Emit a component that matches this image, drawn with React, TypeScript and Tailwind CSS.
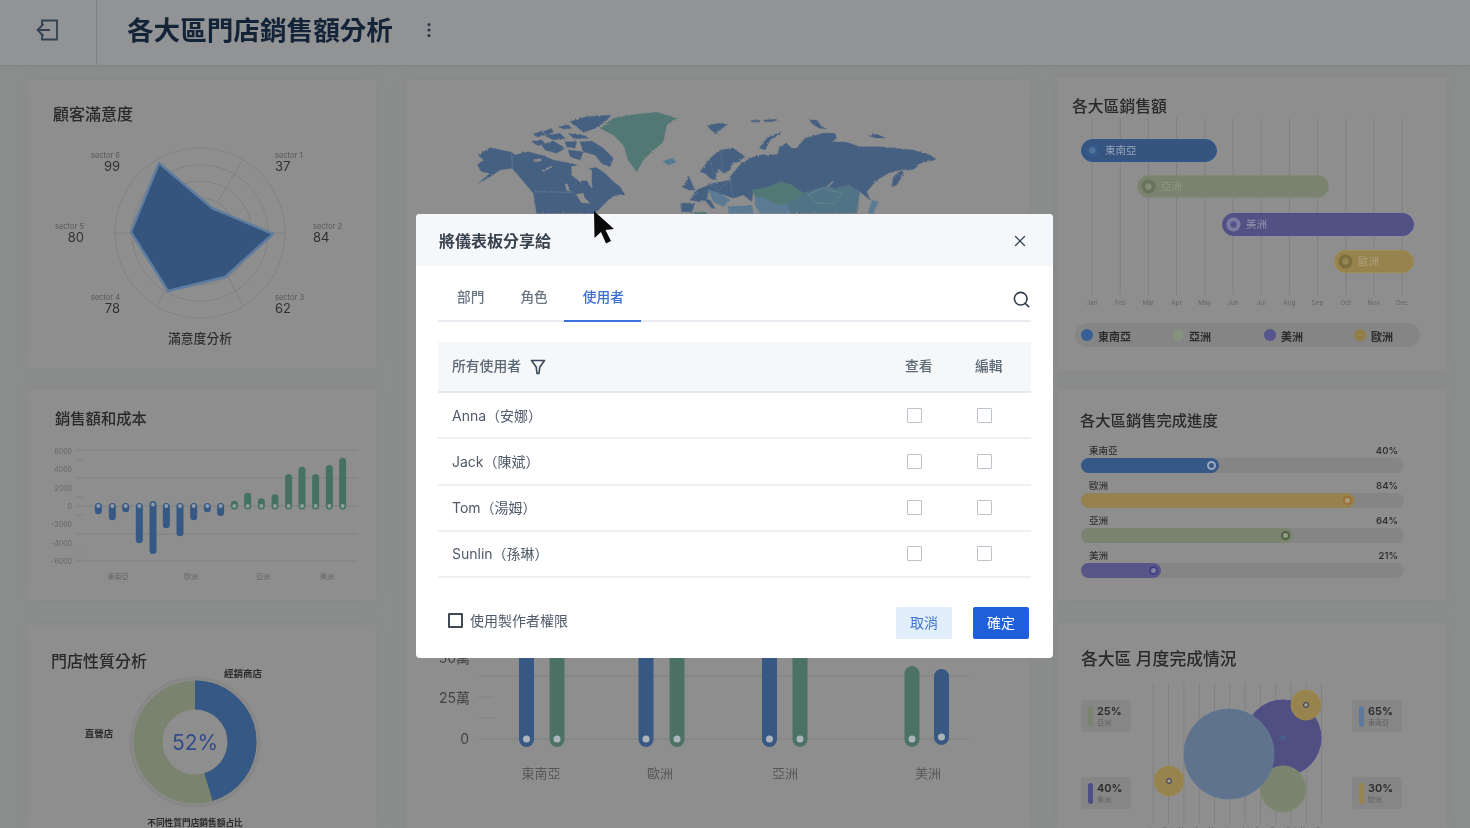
import { Search, X } from "lucide-react";

const months = ["Jan","Feb","Mar","Apr","May","Jun","Jul","Aug","Sep","Oct","Nov","Dec"];

const BLUE = "#456690", GRN = "#50807c", TEAL = "#4f7a90", LIGHT = "#5a82a0", GAP = "#969696";

function Poly({ p, c }: { p: string; c: string }) {
  return <polygon points={p} fill={c} stroke={c} strokeWidth="1" strokeLinejoin="round" />;
}

function WorldMap() {
  const west: [string, string][] = [
    ["25,150 60,128 125,142 135,150 175,140 220,152 250,165 300,175 360,190 380,188 405,205 430,230 450,245 465,270 440,270 420,280 405,295 385,315 370,325 200,325 190,265 165,235 140,205 125,190 90,195 60,215 25,235 60,205 35,200 22,180 40,165", BLUE],
    ["305,185 335,178 365,195 365,250 350,225 330,230 305,210", GAP],
    ["318,268 340,265 345,280 360,295 335,293", GAP],
    ["215,197 245,183 245,187 222,199", GAP],
    ["190,165 215,160 212,168 195,170", GAP],
    ["285,238 292,236 298,258 290,255", GAP],
    ["300,50 350,35 425,30 405,50 375,70 340,82 320,65", BLUE],
    ["265,65 295,60 305,70 280,72", BLUE],
    ["220,80 245,70 250,82 228,90", BLUE],
    ["190,88 215,78 225,90 200,95", BLUE],
    ["225,92 270,85 285,100 250,105", BLUE],
    ["295,85 345,92 355,100 310,100", BLUE],
    ["185,110 215,105 225,115 205,122", BLUE],
    ["215,120 250,108 285,130 260,145 225,135", BLUE],
    ["330,110 365,108 400,130 430,160 420,185 395,175 375,150 340,140", BLUE],
    ["285,110 320,110 315,130 290,125", BLUE],
    ["295,135 340,140 330,165 300,155", BLUE],
    ["390,70 430,40 500,28 560,22 620,40 590,60 580,110 545,140 520,165 500,200 475,165 460,120 430,90", GRN],
    ["578,168 610,160 617,172 595,180", "#4f829c"],
  ];
  const east: [string, string][] = [
    ["82,62 115,55 142,58 120,75 105,85 90,72", BLUE],
    ["212,47 240,45 238,50 216,51", BLUE],
    ["250,45 290,43 285,49 255,50", BLUE],
    ["390,45 410,45 425,65 440,72 415,68 395,55", BLUE],
    ["565,92 590,88 615,98 590,100", BLUE],
    ["240,125 265,95 305,82 300,88 270,105 255,135 240,130", BLUE],
    ["150,215 180,180 210,160 240,150 290,150 300,125 320,115 335,130 350,130 375,100 430,85 465,85 470,100 455,110 500,112 540,125 600,125 640,130 700,135 750,150 768,163 720,175 700,195 660,195 625,205 590,225 560,260 570,285 540,260 505,240 470,250 430,245 400,255 370,265 335,240 300,230 270,245 220,255 215,290 190,270 160,240", BLUE],
    ["635,245 640,215 665,195 670,205 650,240", BLUE],
    ["437,248 458,228 460,231 440,250", GAP],
    ["60,200 90,160 120,135 160,130 195,155 175,170 155,175 150,195 130,205 115,190 105,225 90,220 75,205", BLUE],
    ["15,240 25,212 40,245 45,255 25,255 5,245", BLUE],
    ["30,285 50,255 100,235 150,225 190,250 190,270 160,280 120,265 85,255 80,285 60,290", BLUE],
    ["3,295 45,295 35,320 5,320", BLUE],
    ["85,255 120,265 150,285 130,305 100,290", LIGHT],
    ["75,285 90,285 105,310 95,310", BLUE],
    ["145,305 215,300 220,325 145,325", LIGHT],
    ["225,275 250,275 290,300 320,295 330,325 240,325 225,300", LIGHT],
    ["218,255 270,245 300,230 335,240 370,265 345,285 320,295 290,300 250,275 225,275", GRN],
    ["370,265 400,255 430,245 470,250 505,240 540,260 535,290 530,325 330,325 320,295 345,285", TEAL],
    ["575,285 595,290 580,325 565,325", LIGHT],
    ["42,322 80,322 78,327 45,327", GRN],
  ];
  return (
    <svg className="block ml-[3px] mt-[10px] w-[650px] h-[125px] shrink-0" viewBox="0 0 1950 375">
      <defs>
        <filter id="coast" x="-2%" y="-2%" width="104%" height="104%">
          <feTurbulence type="fractalNoise" baseFrequency="0.14" numOctaves="2" seed="4" />
          <feDisplacementMap in="SourceGraphic" scale="8" />
        </filter>
      </defs>
      <g filter="url(#coast)">
        <g transform="translate(180 45)">
          {west.map(([p, c], i) => <Poly key={i} p={p} c={c} />)}
          <polyline points="190,260 312,262" fill="none" stroke="#7a92b0" strokeWidth="1.5" />
          <polyline points="125,142 127,195" fill="none" stroke="#7a92b0" strokeWidth="1.5" />
        </g>
        <g transform="translate(810 45)">
          {east.map(([p, c], i) => <Poly key={i} p={p} c={c} />)}
          <polyline points="385,268 430,250 490,265 460,295 410,295 385,268" fill="none" stroke="#7a9eac" strokeWidth="1.5" />
          <polyline points="90,160 105,225" fill="none" stroke="#7a92b0" strokeWidth="1" />
          <polyline points="120,135 130,205" fill="none" stroke="#7a92b0" strokeWidth="1" />
          <polyline points="100,235 110,260 150,225 160,280" fill="none" stroke="#7a92b0" strokeWidth="1" />
        </g>
      </g>
    </svg>
  );
}

function Radar() {
  const cx = 200, cy = 233;
  const pts = "159,163 212,208 273,234 225,277 168,291 131,232";
  const labels = [
    { x: 275, y: 158, a: "start", n: "sector 1", v: "37" },
    { x: 313, y: 229, a: "start", n: "sector 2", v: "84" },
    { x: 275, y: 300, a: "start", n: "sector 3", v: "62" },
    { x: 120, y: 300, a: "end", n: "sector 4", v: "78" },
    { x: 84, y: 229, a: "end", n: "sector 5", v: "80" },
    { x: 120, y: 158, a: "end", n: "sector 6", v: "99" },
  ];
  return (
    <svg className="block w-[348px] h-[243px]" viewBox="28 125 348 243">
      {[85, 68, 52, 35].map((r) => (
        <circle key={r} cx={cx} cy={cy} r={r} fill="none" stroke="#888888" strokeWidth="1" />
      ))}
      <path d="M217 203 L243 159 M228 277 L243 306 M157 306 L172 277 M113 233 L131 233 M273 233 L285 233" stroke="#888888" strokeWidth="1" />
      <polygon points={pts} fill="#325a8e" stroke="#5f84ae" strokeWidth="2.5" strokeLinejoin="round" />
      {labels.map((l) => (
        <g key={l.n} textAnchor={l.a as "start" | "end"}>
          <text x={l.x} y={l.y} fontSize="7.5" fill="#5c5c5c">{l.n}</text>
          <text x={l.x} y={l.y + 13} fontSize="13" fill="#333" >{l.v}</text>
        </g>
      ))}
      <text x={200} y={343} fontSize="12.8" textAnchor="middle" fill="#333" fontWeight="500">滿意度分析</text>
    </svg>
  );
}

function Bars() {
  const yl = [["6000", 453.5], ["4000", 472], ["2000", 490.5], ["0", 508.5], ["-2000", 527], ["-4000", 545.5], ["-6000", 563.5]] as const;
  const bx = [295,337,377,418,459,499,540,581,622,662].map((v) => v / 3);
  const bb = [403,421,397,490,522,445,469,421,397,408];
  const gx = [703,743,784,825,866,906,947,988,1028].map((v) => v / 3);
  const gt = [362,338,355,343,282,260,282,255,233];
  return (
    <svg className="block w-[348px] h-[163px]" viewBox="28 437 348 163">
      {[450, 478, 506, 534, 561].map((y) => <line key={y} x1="76" x2="358" y1={y} y2={y} stroke="#868686" />)}
      {[460, 497, 515, 552].map((y) => <line key={y} x1="76" x2="83" y1={y} y2={y} stroke="#868686" />)}
      {yl.map(([t, y]) => <text key={t} x="72" y={y} fontSize="7" textAnchor="end" fill="#6a6a6a">{t}</text>)}
      {bx.map((x, i) => (
        <g key={x}>
          <rect x={x - 3.5} y={i === 4 ? 501 : 503} width="7" height={380 + bb[i] / 3 - (i === 4 ? 501 : 503)} rx="3.5" fill="#335d94" />
          <circle cx={x} cy={i === 4 ? 504.5 : 506} r="2" fill="#95a4b8" />
        </g>
      ))}
      {gx.map((x, i) => (
        <g key={x}>
          <rect x={x - 3.5} y={380 + gt[i] / 3} width="7" height={509.5 - 380 - gt[i] / 3} rx="3.5" fill="#447866" />
          <circle cx={x} cy="506" r="2" fill="#95a8a0" />
        </g>
      ))}
      {[["東南亞", 118], ["歐洲", 191], ["亞洲", 263], ["美洲", 327]].map(([t, x]) => (
        <text key={t} x={x} y="579" fontSize="7" textAnchor="middle" fill="#6a6a6a">{t}</text>
      ))}
    </svg>
  );
}

function Donut() {
  return (
    <svg className="block w-[348px] h-[163px]" viewBox="28 665 348 163">
      <circle cx="195" cy="742" r="64" fill="none" stroke="#8e8e8e" strokeWidth="3" />
      <circle cx="195" cy="742" r="47" fill="none" stroke="#7f8a72" strokeWidth="29" />
      <circle cx="195" cy="742" r="47" fill="none" stroke="#335d94" strokeWidth="29" strokeDasharray="133.7 295.3" transform="rotate(-90 195 742)" />
      <text x="195" y="750" fontSize="21" textAnchor="middle" fill="#2f4f9e">52%</text>
      <text x="243" y="677" fontSize="9.5" textAnchor="middle" fill="#2e2e2e" fontWeight="700">經銷商店</text>
      <text x="99" y="736.5" fontSize="9.5" textAnchor="middle" fill="#2e2e2e" fontWeight="700">直營店</text>
      <text x="195" y="826" fontSize="8.7" textAnchor="middle" fill="#2e2e2e" fontWeight="700">不同性質門店銷售額占比</text>
    </svg>
  );
}

function MidChart() {
  const bars = [
    [526.5, "#355d92", 640, 747], [557, "#4a7a68", 640, 747],
    [646, "#355d92", 640, 747], [677, "#4a7a68", 640, 747],
    [769.5, "#355d92", 640, 747], [800, "#4a7a68", 640, 747],
    [912, "#4a7a68", 666, 747], [941.5, "#355d92", 669, 745],
  ] as const;
  return (
    <svg className="block w-[622px] h-[188px] mt-auto shrink-0" viewBox="407 640 622 188">
      <line x1="479" x2="969" y1="676" y2="676" stroke="#868686" />
      <line x1="479" x2="969" y1="739" y2="739" stroke="#868686" />
      <line x1="478" x2="494" y1="697" y2="697" stroke="#888" />
      <line x1="478" x2="494" y1="718" y2="718" stroke="#888" />
      <text x="470" y="663" fontSize="14" textAnchor="end" fill="#484848">50萬</text>
      <text x="470" y="703" fontSize="14" textAnchor="end" fill="#484848">25萬</text>
      <text x="469" y="744" fontSize="14" textAnchor="end" fill="#484848">0</text>
      {bars.map(([x, c, t, e]) => (
        <g key={x}>
          <rect x={x - 7.5} y={t} width="15" height={e - t} rx="7.5" fill={c} />
          <circle cx={x} cy={e - 8} r="3.5" fill="#b4bec6" />
        </g>
      ))}
      {[["東南亞", 541], ["歐洲", 660], ["亞洲", 785], ["美洲", 928]].map(([t, x]) => (
        <text key={t} x={x} y="778" fontSize="13" textAnchor="middle" fill="#5c5c5c">{t}</text>
      ))}
    </svg>
  );
}

function Gantt() {
  const rows = [
    { x: 1081, w: 136, y: 139, f: "#325a90", s: "#2a5ea4", t: "東南亞", k: "#31609e", i: "#4f78a8", c: "#9aabc2" },
    { x: 1137, w: 192, y: 175, f: "#7f8a72", s: "#85937a", t: "亞洲", k: "#6d7a5d", i: "#879577", c: "#959f87" },
    { x: 1222, w: 192, y: 213, f: "#555594", s: "#5050a4", t: "美洲", k: "#8282b0", i: "#58589c", c: "#9c9cba" },
    { x: 1334, w: 80, y: 250, f: "#a38a48", s: "#ad9248", t: "歐洲", k: "#857538", i: "#a08e52", c: "#b6a97e" },
  ];
  return (
    <svg className="block w-[390px] h-[240px]" viewBox="1057 116 390 240">
      {months.map((m, i) => {
        const x = 1092 + i * 28.2;
        return (
          <g key={m}>
            <line x1={x} x2={x} y1="118" y2="295" stroke="#878787" />
            <text x={x} y="305" fontSize="6.5" textAnchor="middle" fill="#6a6a6a">{m}</text>
          </g>
        );
      })}
      {rows.map((r) => (
        <g key={r.t}>
          <rect x={r.x + 0.5} y={r.y + 0.5} width={r.w - 1} height="22" rx="11" fill={r.f} stroke={r.s} />
          <circle cx={r.x + 11.5} cy={r.y + 11.5} r="7" fill={r.k} />
          <circle cx={r.x + 11.5} cy={r.y + 11.5} r="3.2" fill={r.i} />
          <text x={r.x + 24} y={r.y + 15} fontSize="10.5" fill={r.c}>{r.t}</text>
        </g>
      ))}
      <rect x="1075" y="323" width="345" height="24" rx="12" fill="#8c8c8c" />
      {[[1087, "#3364a8", "東南亞"], [1178, "#8b9a80", "亞洲"], [1270, "#5a5a9e", "美洲"], [1360, "#9a8640", "歐洲"]].map(([x, c, t]) => (
        <g key={t as string}>
          <circle cx={x as number} cy="335" r="6" fill={c as string} />
          <text x={(x as number) + 11} y="340.5" fontSize="11" fontWeight="600" fill="#2e2e2e">{t}</text>
        </g>
      ))}
    </svg>
  );
}

function Progress() {
  const rows = [
    { t: "東南亞", p: "40%", wc: "w-[138px]", bg: "bg-[#335d96]", ring: "border-[#a0b2ca]", dot: "bg-[#335d96]" },
    { t: "歐洲", p: "84%", wc: "w-[274px]", bg: "bg-[#a38848]", ring: "border-[#a8762e]", dot: "bg-[#b6a480]" },
    { t: "亞洲", p: "64%", wc: "w-[212px]", bg: "bg-[#7e8b72]", ring: "border-[#4f663e]", dot: "bg-[#97a48c]" },
    { t: "美洲", p: "21%", wc: "w-[80px]", bg: "bg-[#5c5a98]", ring: "border-[#40409c]", dot: "bg-[#8786b0]" },
  ];
  return (
    <div className="flex flex-col gap-[2px] pl-[24px] pr-[43px] mt-[8px]">
      {rows.map((r) => (
        <div key={r.t} className="flex flex-col">
          <div className="flex justify-between h-[18px] items-center pt-[3px] pl-[8px] pr-[6px] text-[9.5px] leading-none text-[#333] font-medium">
            <span>{r.t}</span>
            <span className="font-semibold">{r.p}</span>
          </div>
          <div className="h-[15px] rounded-full bg-[#8c8c8c]">
            <div className={`${r.wc} ${r.bg} h-[15px] rounded-full flex items-center justify-end pr-[3px]`}>
              <span className={`w-[9px] h-[9px] rounded-full border-2 ${r.ring} ${r.dot}`} />
            </div>
          </div>
        </div>
      ))}
    </div>
  );
}

function Bubbles() {
  return (
    <svg className="block w-[220px] h-[150px] overflow-visible" viewBox="1140 680 220 150">
      {months.map((m, i) => {
        const x = 1153.3 + i * 15.3;
        return (
          <g key={m}>
            <line x1={x} x2={x} y1="683" y2="823" stroke="#878787" />
            <text x={x} y="832" fontSize="6" textAnchor="middle" fill="#6a6a6a">{m}</text>
          </g>
        );
      })}
      <circle cx="1283" cy="738" r="38" fill="#535390" stroke="#4e4ea4" />
      <circle cx="1283" cy="738" r="2" fill="none" stroke="#3d78a8" />
      <circle cx="1283" cy="789" r="23" fill="#808c72" stroke="#859376" />
      <circle cx="1229" cy="754" r="45" fill="#617b98" stroke="#5f7da2" />
      <circle cx="1306" cy="705" r="15" fill="#a38a48" stroke="#a98f4a" />
      <circle cx="1306" cy="705" r="2.4" fill="#b4a988" stroke="#2c2c70" />
      <circle cx="1169" cy="781" r="15" fill="#a38a48" stroke="#a98f4a" />
      <circle cx="1169" cy="781" r="2.4" fill="#b4a988" stroke="#2c2c70" />
    </svg>
  );
}

function Stat({ p, t, c }: { p: string; t: string; c: string }) {
  return (
    <div className="w-[50px] h-[32px] rounded-[3px] bg-[#8d8d8d] flex items-center gap-[3px] pl-[7px]">
      <span className={`w-[5px] h-[21px] rounded-full ${c}`} />
      <div className="flex flex-col pl-[1px]">
        <span className="text-[11px] leading-[13px] font-semibold text-[#2c2c2c]">{p}</span>
        <span className="text-[7px] leading-[9px] text-[#666]">{t}</span>
      </div>
    </div>
  );
}

function Card({ children, className }: { children: React.ReactNode; className: string }) {
  return <section className={`bg-[#969696] shadow-[0_0_10px_rgba(138,142,140,0.8)] overflow-hidden ${className}`}>{children}</section>;
}

function Dashboard() {
  return (
    <div className="h-[828px] overflow-hidden bg-[#939594] blur-[0.7px] brightness-[.95] saturate-[.85]">
      <header className="h-[65px] flex items-center bg-[#9a9b9c] shadow-[0_1px_3px_rgba(125,128,128,0.6)] relative">
        <div className="w-[97px] h-full flex items-center justify-center border-r border-[#858a8b] pb-[5px] pr-[3px] shrink-0">
          <svg width="24" height="24" viewBox="35 18 24 24" fill="none" stroke="#324559" strokeWidth="1.8">
            <path d="M42 25 V20.5 H57 V39.5 H42 V35" />
            <path d="M37.5 30 H50 M43.5 24 L37.5 30 L43.5 36" />
          </svg>
        </div>
        <h1 className="ml-[30px] mb-[5px] text-[26.6px] leading-none font-bold text-[#13263f]">各大區門店銷售額分析</h1>
        <svg className="ml-[33px] mb-[5px]" width="6" height="16" viewBox="0 0 6 16" fill="#25364a">
          <circle cx="3" cy="2.5" r="1.5" /><circle cx="3" cy="8" r="1.5" /><circle cx="3" cy="13.5" r="1.5" />
        </svg>
      </header>
      <div className="flex pl-[28px]">
        <div className="w-[348px] flex flex-col pt-[15px] shrink-0">
          <Card className="h-[288px]">
            <h2 className="pl-[25px] pt-[23px] h-[45px] text-[16px] leading-[22px] text-[#2b2b2b] font-medium">顧客滿意度</h2>
            <Radar />
          </Card>
          <Card className="h-[210px] mt-[22px]">
            <h2 className="pl-[27px] pt-[18px] h-[47px] text-[15.3px] leading-[22px] text-[#2b2b2b] font-medium">銷售額和成本</h2>
            <Bars />
          </Card>
          <Card className="h-[203px] mt-[25px]">
            <h2 className="pl-[23px] pt-[25px] h-[40px] text-[16px] leading-[22px] text-[#2b2b2b] font-medium whitespace-nowrap">門店性質分析</h2>
            <Donut />
          </Card>
        </div>
        <Card className="w-[622px] ml-[31px] mt-[15px] h-[748px] flex flex-col shrink-0">
          <WorldMap />
          <MidChart />
        </Card>
        <div className="w-[390px] ml-[28px] flex flex-col pt-[13px] shrink-0">
          <Card className="h-[292px]">
            <h2 className="pl-[15px] pt-[18px] h-[38px] text-[15.8px] leading-[22px] text-[#2b2b2b] font-medium">各大區銷售額</h2>
            <Gantt />
          </Card>
          <Card className="h-[210px] mt-[20px]">
            <h2 className="pl-[23px] pt-[20px] h-[42px] text-[15.3px] leading-[22px] text-[#2b2b2b] font-medium">各大區銷售完成進度</h2>
            <Progress />
          </Card>
          <Card className="h-[205px] mt-[23px]">
            <h2 className="pl-[24px] pt-[25px] text-[16.8px] leading-[22px] text-[#2b2b2b] font-medium whitespace-pre">各大區 月度完成情況</h2>
            <div className="flex mt-[10px] pl-[24px] gap-[9px] items-start">
              <div className="flex flex-col gap-[45px] mt-[20px] shrink-0">
                <Stat p="25%" t="亞洲" c="bg-[#7f8a72]" />
                <Stat p="40%" t="美洲" c="bg-[#525298]" />
              </div>
              <Bubbles />
              <div className="flex flex-col gap-[45px] mt-[20px] -ml-[17px] shrink-0">
                <Stat p="65%" t="東南亞" c="bg-[#5c80ac]" />
                <Stat p="30%" t="歐洲" c="bg-[#a38a48]" />
              </div>
            </div>
          </Card>
        </div>
      </div>
    </div>
  );
}

function Box() {
  return <span className="block w-[15px] h-[15px] border-[1.5px] border-[#bcc3cb] rounded-[1px] bg-white" />;
}

function Modal() {
  const users = ["Anna（安娜）", "Jack（陳斌）", "Tom（湯姆）", "Sunlin（孫琳）"];
  return (
    <div className="absolute left-[416px] top-[214px] w-[637px] h-[444px] rounded-[4px] bg-white overflow-hidden blur-[0.4px]">
      <div className="h-[52px] bg-[#f5f7fa] flex items-center justify-between pl-[23px] pr-[24px] pt-[2px]">
        <span className="text-[16px] font-semibold text-[#39434f]">將儀表板分享給</span>
        <X size={18} strokeWidth={1.8} className="text-[#3d4856]" />
      </div>
      <div className="mx-[22px] h-[56px] pt-[9px] border-b-2 border-[#e8ecf0] flex items-center relative text-[13.7px] font-medium">
        <span className="ml-[19px] text-[#6a7482]">部門</span>
        <span className="ml-[36px] text-[#6a7482]">角色</span>
        <span className="ml-[35px] text-[#3a6fd8]">使用者</span>
        <span className="absolute left-[126px] -bottom-[2px] w-[77px] h-[2px] bg-[#3a72de]" />
        <Search size={19} strokeWidth={2} className="ml-auto mt-[3px] text-[#2e3a4a]" />
      </div>
      <div className="mx-[22px] mt-[20px] h-[51px] bg-[#f5f7f9] border-b-2 border-[#e5e8ec] flex items-center pl-[14px] text-[13.8px] text-[#5d6876] font-medium whitespace-nowrap">
        <span>所有使用者</span>
        <svg className="ml-[9px]" width="16" height="16" viewBox="0 0 16 16" fill="none" stroke="#3b4859" strokeWidth="1.6" strokeLinejoin="round">
          <path d="M1.5 1.5 H14.5 L9.8 8 L9 14.5 H7 L6.2 8 Z" />
        </svg>
        <span className="ml-auto w-[28px]">查看</span>
        <span className="ml-[42px] mr-[28px] w-[28px]">編輯</span>
      </div>
      {users.map((u) => (
        <div key={u} className="mx-[22px] h-[46.25px] border-b-2 border-[#eef1f4] flex items-center pl-[14px] text-[14px] text-[#4f5a69]">
          <span>{u}</span>
          <span className="ml-auto"><Box /></span>
          <span className="ml-[55px] mr-[39px]"><Box /></span>
        </div>
      ))}
      <div className="mx-[24px] mt-[29px] flex items-start justify-between">
        <label className="flex items-center ml-[8px] -mt-[1px] h-[28px] text-[14px] text-[#4f5a69]">
          <span className="block w-[15px] h-[15px] border-2 border-[#3f4a58] rounded-[1px]" />
          <span className="ml-[7px]">使用製作者權限</span>
        </label>
        <div className="flex gap-[21px]">
          <button className="w-[56px] h-[32px] pb-[1px] rounded-[2px] bg-[#e3eefb] text-[#3f75d3] text-[14px]">取消</button>
          <button className="w-[56px] h-[32px] pb-[1px] rounded-[2px] bg-[#1f5fd9] text-white text-[14px]">確定</button>
        </div>
      </div>
    </div>
  );
}

export default function App() {
  return (
    <div className="relative w-[1470px] h-[828px] overflow-hidden font-['Inter','Noto_Sans_CJK_TC',sans-serif]">
      <Dashboard />
      <Modal />
      <svg className="absolute left-[590px] top-[208px]" width="28" height="38" viewBox="0 0 28 38">
        <path d="M4 3 L24 21 L15.5 22 L21 33 L16 35.5 L11 24 L4.5 30 Z" fill="#0a0a0a" />
      </svg>
    </div>
  );
}
